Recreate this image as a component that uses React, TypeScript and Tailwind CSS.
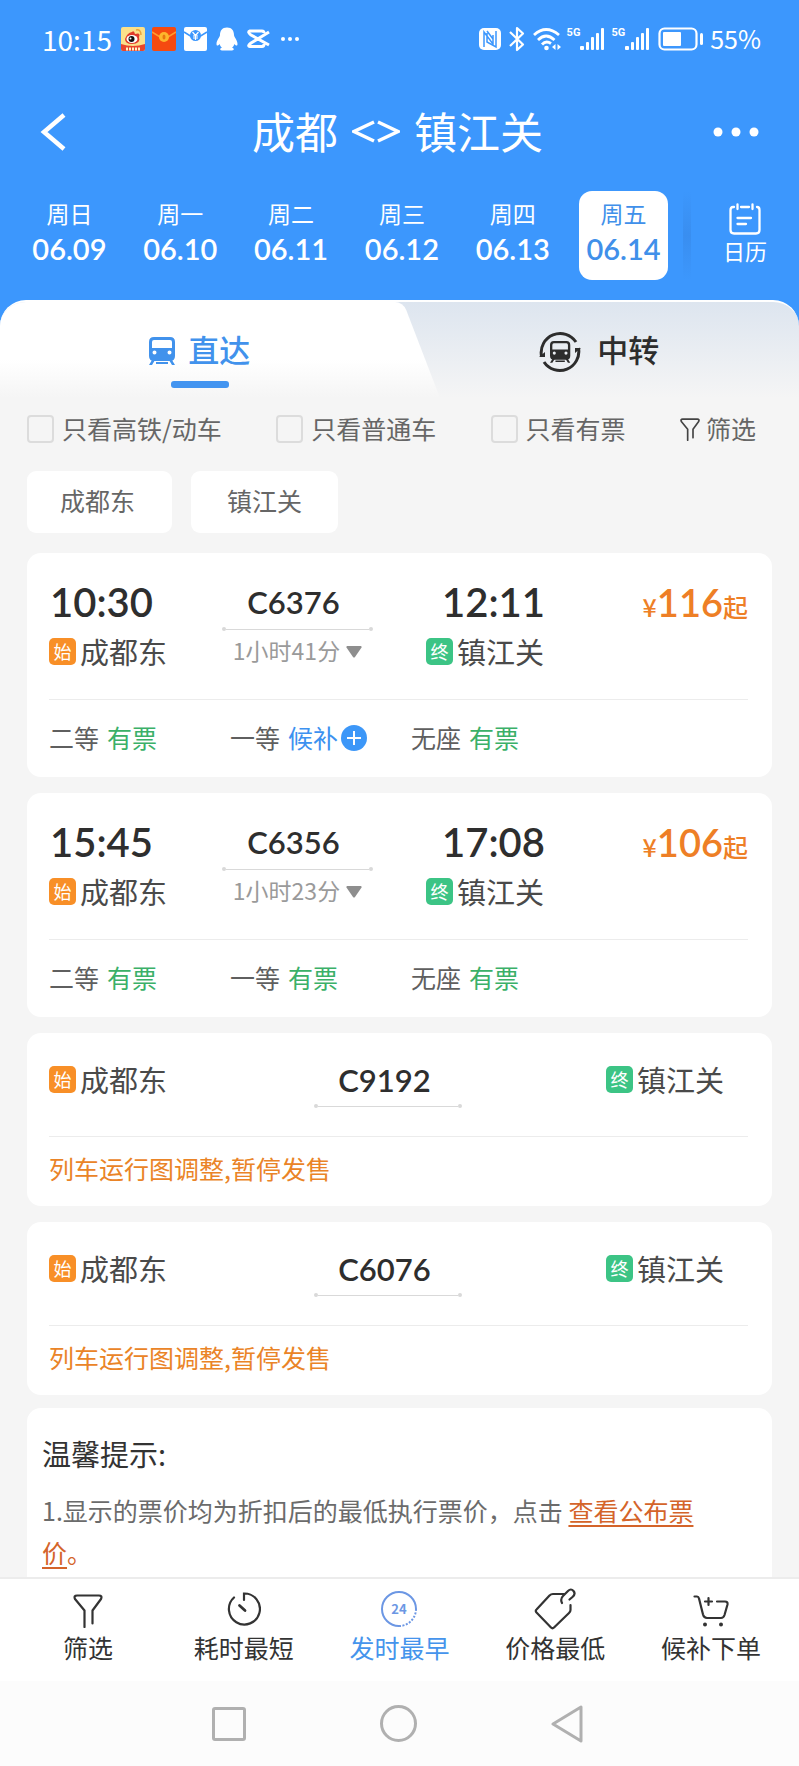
import type { ReactNode } from "react";

const dates = [
  { week: "周日", day: "06.09" },
  { week: "周一", day: "06.10" },
  { week: "周二", day: "06.11" },
  { week: "周三", day: "06.12" },
  { week: "周四", day: "06.13" },
  { week: "周五", day: "06.14", active: true },
];

const filters = ["只看高铁/动车", "只看普通车", "只看有票"];

type Seat = { name: string; status: string; waitlist?: boolean };

type Train = {
  no: string;
  depart: string;
  arrive: string;
  duration: string;
  price: string;
  seats: Seat[];
};

const trains: Train[] = [
  {
    no: "C6376",
    depart: "10:30",
    arrive: "12:11",
    duration: "1小时41分",
    price: "116",
    seats: [
      { name: "二等", status: "有票" },
      { name: "一等", status: "候补", waitlist: true },
      { name: "无座", status: "有票" },
    ],
  },
  {
    no: "C6356",
    depart: "15:45",
    arrive: "17:08",
    duration: "1小时23分",
    price: "106",
    seats: [
      { name: "二等", status: "有票" },
      { name: "一等", status: "有票" },
      { name: "无座", status: "有票" },
    ],
  },
];

const suspended = ["C9192", "C6076"];

function FunnelIcon({ className }: { className: string }) {
  return (
    <svg viewBox="0 0 30 34" className={className} fill="none" stroke="currentColor" strokeLinecap="round" strokeLinejoin="round">
      <path d="M11.500 33V16.500L2 5Q.5 1.500 4 1.500H26Q29.500 1.500 28 5L19.500 16.500V29.500" />
    </svg>
  );
}

function SignalIcon() {
  return (
    <div className="flex">
      <span className="font-[Roboto] text-[11px] leading-[12px] font-bold">5G</span>
      <svg viewBox="0 0 25 24" className="h-6 w-[25px]" fill="currentColor">
        <rect x="0" y="19" width="4" height="4" rx="1" />
        <rect x="6" y="15" width="3" height="8" rx="1" />
        <rect x="11" y="10" width="3" height="13" rx="1" />
        <rect x="16" y="6" width="3" height="17" rx="1" />
        <rect x="21" y="1" width="3" height="22" rx="1" />
      </svg>
    </div>
  );
}

function StatusBar() {
  return (
    <div className="flex h-[78px] items-center justify-between pr-[38px] pl-[42px]">
      <div className="flex items-center">
        <span className="w-[79px] text-[28px] whitespace-nowrap">10:15</span>
        <svg viewBox="0 0 24 24" className="h-6 w-6">
          <rect width="24" height="24" rx="2" fill="#fbe08a" />
          <path d="M0 17Q12 21 24 17V22Q24 24 22 24H2Q0 24 0 22Z" fill="#e8452c" />
          <path d="M5 20.500h2v3H5zM8 20.500h2v3H8zM11 20.500h2v3h-2zM14 20.500h2v3h-2zM17 20.500h2v3h-2z" fill="#fff3c4" />
          <path d="M4 12Q6 6 11 5Q13 3 14 7Q20 5 18 10Q20 17 11 17Q4 17 4 12Z" fill="#e03a2a" />
          <ellipse cx="11" cy="12" rx="5.500" ry="4" fill="#fff" />
          <circle cx="10.500" cy="12" r="3" fill="#111" />
          <circle cx="9.500" cy="11.500" r="1" fill="#fff" />
          <path d="M15 3Q20 2 20 8" fill="none" stroke="#e9a23a" strokeWidth="1.500" />
        </svg>
        <svg viewBox="0 0 24 24" className="ml-[7px] h-6 w-6">
          <rect width="24" height="24" rx="2" fill="#f54a10" />
          <path d="M0 5L8 10H16L24 5" fill="none" stroke="#ff9a2e" strokeWidth="1.500" />
          <circle cx="12" cy="10" r="5" fill="#fdb62c" />
          <ellipse cx="12" cy="10" rx="1.500" ry="2.500" fill="#e8760e" />
        </svg>
        <svg viewBox="0 0 24 24" className="ml-2 h-6 w-6">
          <rect width="23" height="24" rx="2" fill="#fff" />
          <path d="M0 5L8 10H15L23 5" fill="none" stroke="#3c97fd" strokeWidth="1.500" />
          <circle cx="11.500" cy="8.500" r="5.500" fill="#3c97fd" />
          <path d="M8.500 5L11.500 8.500L14.500 5M11.500 8.500V13M9 9H14M9 11H14" fill="none" stroke="#fff" strokeWidth="1.200" />
        </svg>
        <svg viewBox="0 0 22 24" className="ml-2 h-6 w-[22px]" fill="#fff">
          <path d="M11 0.500C6 .5 4 4 4 8C4 10 .5 13 .5 17C.5 19 2 19 3.500 17C4 18.500 5 20 6 20.500C3 22 4 23.500 7 23.500H15C18 23.500 19 22 16 20.500C17 20 18 18.500 18.500 17C20 19 21.500 19 21.500 17C21.500 13 18 10 18 8C18 4 16 .5 11 .5Z" />
        </svg>
        <svg viewBox="0 0 24 20" className="ml-2 h-5 w-6" fill="none" stroke="#fff" strokeWidth="3" strokeLinejoin="round">
          <path d="M23 3L5 14Q1 17 4 17.500H16Q18 17.500 18 15M23 16L5 6Q1 3 4 2H16Q18 2 18 4" />
        </svg>
        <svg viewBox="0 0 20 6" className="ml-[10px] h-[6px] w-5" fill="#fff">
          <circle cx="3" cy="3" r="2" />
          <circle cx="10" cy="3" r="2" />
          <circle cx="17" cy="3" r="2" />
        </svg>
      </div>
      <div className="flex items-center">
        <svg viewBox="0 0 22 24" className="h-6 w-[22px]">
          <rect y="1" width="22" height="22" rx="5" fill="#fff" />
          <path d="M5 20V5L14 17V8M8 6V15L17 20V4M8 4L14 12" fill="none" stroke="#3c97fd" strokeWidth="1.500" />
        </svg>
        <svg viewBox="0 0 16 26" className="ml-2 h-[26px] w-4" fill="none" stroke="#fff" strokeWidth="2.200" strokeLinejoin="round">
          <path d="M1 6L14 18.500L8 24V2L14 7.500L1 20" />
        </svg>
        <svg viewBox="0 0 28 24" className="ml-2 h-6 w-7" fill="none" stroke="#fff" strokeWidth="2.800">
          <path d="M1 8Q13 -3 26 8M5 13Q13 5 21.500 13M9 17.500Q13 13 18 16.500" />
          <circle cx="13.500" cy="21" r="2.300" fill="#fff" stroke="none" />
          <path d="M22.500 17V23L19 20ZM24.500 17V23L28 20Z" fill="#fff" stroke="none" />
        </svg>
        <div className="ml-[6px] flex gap-[6px]">
          <SignalIcon />
          <SignalIcon />
        </div>
        <svg viewBox="0 0 46 26" className="ml-2 h-[26px] w-[46px]">
          <rect x="1.500" y="2.500" width="37" height="21" rx="5" fill="none" stroke="#fff" strokeWidth="2.200" />
          <rect x="5" y="6" width="18" height="14" rx="1" fill="#fff" />
          <rect x="42" y="7" width="3" height="12" rx="1.500" fill="#fff" />
        </svg>
        <span className="ml-[6px] text-[25px]">55%</span>
      </div>
    </div>
  );
}

function Badge({ type }: { type: "始" | "终" }) {
  return (
    <span
      className={`flex h-[27px] w-[27px] items-center justify-center rounded-[5px] text-[18px] leading-none text-white ${
        type === "始" ? "bg-[#f88f27]" : "bg-[#3cc485]"
      }`}
    >
      {type}
    </span>
  );
}

function Station({ type, name }: { type: "始" | "终"; name: string }) {
  return (
    <div className="flex items-center gap-1 text-[29px] leading-[36px] whitespace-nowrap text-[#4a4a4a]">
      <Badge type={type} />
      {name}
    </div>
  );
}

function RouteLine() {
  return (
    <div className="flex w-full items-center">
      <i className="h-1 w-1 rounded-full bg-[#d9d9d9]" />
      <i className="h-px flex-1 bg-[#d9d9d9]" />
      <i className="h-1 w-1 rounded-full bg-[#d9d9d9]" />
    </div>
  );
}

function TrainCard({ train }: { train: Train }) {
  return (
    <article className="rounded-[14px] bg-white pr-6 pl-[22px]">
      <div className="grid h-[146px] grid-cols-[173fr_204fr_180fr_142fr] pt-[25px]">
        <div>
          <p className="pl-px font-[Lato] text-[40px] leading-[48px] font-semibold text-[#2e2e2e]">{train.depart}</p>
          <div className="mt-[7px]">
            <Station type="始" name="成都东" />
          </div>
        </div>
        <div className="flex w-[151px] flex-col items-center">
          <p className="pr-2 font-[Lato] text-[31px] leading-[49px] font-semibold text-[#2e2e2e]">{train.no}</p>
          <RouteLine />
          <button className="mt-px flex items-center gap-[6px] text-[23px] leading-[36px] whitespace-nowrap text-[#9a9a9a]">
            {train.duration}
            <svg viewBox="0 0 16 12" className="mt-1 h-3 w-4" fill="#8e8e8e">
              <path d="M1 0H15Q16 .5 15.500 1.500L9 11Q8 12 7 11L.5 1.500Q0 .5 1 0Z" />
            </svg>
          </button>
        </div>
        <div>
          <p className="pl-4 font-[Lato] text-[40px] leading-[48px] font-semibold text-[#2e2e2e]">{train.arrive}</p>
          <div className="mt-[7px]">
            <Station type="终" name="镇江关" />
          </div>
        </div>
        <p className="text-right leading-[48px] font-medium whitespace-nowrap text-[#ee7f26]">
          <span className="text-[25px]">¥</span>
          <span className="font-[Lato] text-[38px] font-semibold">{train.price}</span>
          <span className="text-[25px]">起</span>
        </p>
      </div>
      <ul className="flex h-[78px] items-center border-t border-[#ececec] pb-px text-[25px] text-[#5f5f5f]">
        {train.seats.map((seat) => (
          <li key={seat.name} className="flex w-[181px] items-center gap-2 whitespace-nowrap">
            {seat.name}
            {seat.waitlist ? (
              <button className="flex items-center gap-[3px] text-[#3c91f0]">
                {seat.status}
                <svg viewBox="0 0 26 26" className="h-[26px] w-[26px]">
                  <circle cx="13" cy="13" r="13" fill="#3c97f8" />
                  <path d="M13 6V20M6 13H20" stroke="#fff" strokeWidth="2" />
                </svg>
              </button>
            ) : (
              <span className="text-[#3bb068]">{seat.status}</span>
            )}
          </li>
        ))}
      </ul>
    </article>
  );
}

function SuspendedCard({ no }: { no: string }) {
  return (
    <article className="rounded-[14px] bg-white pr-6 pl-[22px]">
      <div className="flex h-[103px] items-start justify-between pt-[23px] pr-6">
        <div className="mt-[5px] w-[122px]">
          <Station type="始" name="成都东" />
        </div>
        <div className="w-[148px] text-center">
          <p className="pr-2 font-[Lato] text-[31px] leading-[48px] font-semibold text-[#2e2e2e]">{no}</p>
          <RouteLine />
        </div>
        <div className="mt-[5px]">
          <Station type="终" name="镇江关" />
        </div>
      </div>
      <p className="flex h-[70px] items-center border-t border-[#ececec] pb-[5px] text-[25px] text-[#ea8427]">
        列车运行图调整,暂停发售
      </p>
    </article>
  );
}

function TrainGlyph() {
  return (
    <>
      <path fillRule="evenodd" d="M5 0H21Q26 0 26 5V19Q26 24 21 24H5Q0 24 0 19V5Q0 0 5 0ZM5 3Q3 3 3 5V11H23V5Q23 3 21 3ZM5.500 13.500A2 2 0 1 0 5.500 17.500A2 2 0 1 0 5.500 13.500ZM20.500 13.500A2 2 0 1 0 20.500 17.500A2 2 0 1 0 20.500 13.500Z" />
      <path d="M3 23L0 28H3L6 23ZM23 23L26 28H23L20 23ZM7 25H19V27H7Z" />
    </>
  );
}

function BottomItem({ label, active, children }: { label: string; active?: boolean; children: ReactNode }) {
  return (
    <button
      className={`flex flex-1 flex-col items-center text-[25px] leading-[34px] whitespace-nowrap ${
        active ? "text-[#4594ec]" : "text-[#333]"
      }`}
    >
      <span className="flex h-[42px] items-center">{children}</span>
      {label}
    </button>
  );
}

export default function App() {
  return (
    <div className="flex h-screen flex-col overflow-hidden bg-[#f5f5f5] font-['Noto_Sans_CJK_SC',sans-serif]">
      <header className="bg-[#3c97fd] text-white">
        <StatusBar />
        <div className="flex h-[108px] items-center justify-between pr-10 pl-10">
          <button aria-label="返回" className="w-[42px]">
            <svg viewBox="0 0 26 38" className="h-[38px] w-[26px]" fill="none" stroke="currentColor" strokeWidth="4.500">
              <path d="M24 2L4 19L24 36" />
            </svg>
          </button>
          <h1 className="flex items-center gap-[14px] pb-1 text-[43px]">
            成都
            <svg viewBox="0 0 48 24" className="mt-1 h-6 w-12" fill="none" stroke="currentColor" strokeWidth="3.500">
              <path d="M22 2L2 11.500L22 21M26 2L46 11.500L26 21" />
            </svg>
            镇江关
          </h1>
          <button aria-label="更多">
            <svg viewBox="0 0 46 10" className="h-[10px] w-[46px]" fill="currentColor">
              <circle cx="5" cy="5" r="4.500" />
              <circle cx="23" cy="5" r="4.500" />
              <circle cx="41" cy="5" r="4.500" />
            </svg>
          </button>
        </div>
        <nav className="flex pt-[5px] pb-5 pl-[14px]">
          {dates.map((d) => (
            <div key={d.day} className="flex flex-1 justify-center">
              <button
                className={`flex h-[89px] w-[89px] flex-col items-center rounded-[13px] pt-1 ${
                  d.active ? "bg-white text-[#4090ea]" : ""
                }`}
              >
                <span className="text-[23px] leading-[36px]">{d.week}</span>
                <span className="font-[Lato] text-[29px] leading-[36px] font-semibold">{d.day}</span>
              </button>
            </div>
          ))}
          <div className="ml-1 w-2 bg-linear-to-b from-transparent via-[#398ef0] to-transparent" />
          <button className="flex w-[108px] flex-col items-center pt-3 text-[22px] leading-[30px]">
            <svg viewBox="0 0 32 32" className="h-8 w-8" fill="none" stroke="currentColor" strokeWidth="2.300" strokeLinecap="round">
              <path d="M5 4H4Q1.500 4 1.500 7V27Q1.500 30.500 5 30.500H27Q30.500 30.500 30.500 27V7Q30.500 4 28 4M12 4H20M8.500 1.500V6M23.500 1.500V6M8.500 15H22M8.500 21H17" />
            </svg>
            <span>日历</span>
          </button>
        </nav>
      </header>

      <div className="bg-linear-to-b from-[#3c97fd] from-50% to-[#f5f5f5] to-50%">
        <div className="relative isolate flex h-[98px] overflow-hidden rounded-t-[26px] border-t-2 border-white bg-linear-to-b from-[#dde5ef] to-[#f5f5f5]">
          <div className="absolute inset-y-0 left-0 -z-10 w-[48%] bg-linear-to-b from-white from-60% to-[#f5f5f5]" />
          <div className="absolute inset-y-0 left-[41%] -z-10 w-[14%] origin-bottom skew-x-[21deg] rounded-tr-[8px] bg-linear-to-b from-white from-60% to-[#f5f5f5]" />
          <button className="flex w-1/2 flex-col items-center text-[31px] leading-[44px] font-medium text-[#4192ec]">
            <span className="mt-[25px] flex items-center gap-[13px]">
              <svg viewBox="0 0 26 28" className="mt-1 h-7 w-[26px]" fill="currentColor">
                <TrainGlyph />
              </svg>
              直达
            </span>
            <span className="mt-[10px] h-[7px] w-[58px] rounded-[3px] bg-[#4294f0]" />
          </button>
          <button className="flex w-1/2 items-start justify-center gap-4 text-[31px] leading-[44px] font-medium text-[#2d2d2d]">
            <svg viewBox="0 0 42 42" className="mt-[29px] h-[42px] w-[42px]" fill="currentColor">
              <path d="M2.500 25A19 19 0 0 1 37 11M39.500 17A19 19 0 0 1 5 31" fill="none" stroke="currentColor" strokeWidth="3" />
              <path d="M0 26L6 21V26ZM42 17L36 22V17Z" />
              <g transform="translate(11 10) scale(.78)">
                <TrainGlyph />
              </g>
            </svg>
            <span className="mt-[25px]">中转</span>
          </button>
        </div>
      </div>

      <main className="flex min-h-0 flex-1 flex-col overflow-hidden px-[27px]">
        <div className="flex h-[62px] items-center justify-between pr-4 text-[25px] text-[#666]">
          {filters.map((label) => (
            <label key={label} className="flex items-center gap-2 whitespace-nowrap">
              <input type="checkbox" className="h-[28px] w-[27px] appearance-none rounded-[4px] border-2 border-[#dcdcdc]" />
              {label}
            </label>
          ))}
          <button className="flex items-center gap-[6px] whitespace-nowrap">
            <FunnelIcon className="h-[23px] w-5 stroke-[2.5] text-[#444]" />
            筛选
          </button>
        </div>
        <div className="mt-[11px] flex gap-[19px] text-[25px] text-[#666]">
          <button className="h-[62px] w-[145px] rounded-[9px] bg-white pr-1 pb-[3px]">成都东</button>
          <button className="h-[62px] w-[147px] rounded-[9px] bg-white pb-[3px]">镇江关</button>
        </div>
        <div className="mt-5 flex flex-col gap-4">
          {trains.map((train) => (
            <TrainCard key={train.no} train={train} />
          ))}
          {suspended.map((no) => (
            <SuspendedCard key={no} no={no} />
          ))}
        </div>
        <section className="mt-[13px] flex-1 rounded-t-[14px] bg-white pt-[22px] pr-12 pl-[15px]">
          <h2 className="text-[29px] leading-[46px] text-[#333]">温馨提示:</h2>
          <p className="mt-[13px] text-[25px] leading-[42px] text-[#6b6b6b]">
            1.显示的票价均为折扣后的最低执行票价，点击{" "}
            <a href="#" className="text-[#d4642a] underline underline-offset-4">
              查看公布票价
            </a>
            <span className="text-[#d4642a]">。</span>
          </p>
        </section>
      </main>

      <footer>
        <div className="flex h-[104px] border-t-2 border-[#ececec] bg-white px-[10px] pt-[9px]">
          <BottomItem label="筛选">
            <FunnelIcon className="mt-1 h-[34px] w-[30px] stroke-[2.2]" />
          </BottomItem>
          <BottomItem label="耗时最短">
            <svg viewBox="0 0 34 34" className="h-[34px] w-[34px]" fill="none" stroke="currentColor" strokeWidth="2.200" strokeLinecap="round">
              <path d="M17 8V1.500A15.500 15.500 0 1 1 7 5.500" />
              <path d="M12.500 13.500L18 18.500" strokeWidth="2.800" />
            </svg>
          </BottomItem>
          <BottomItem label="发时最早" active>
            <svg viewBox="0 0 36 36" className="h-9 w-9" fill="none" stroke="#6c97e4" strokeWidth="2">
              <path d="M35 18A17 17 0 1 0 18 35" />
              <path d="M35 18A17 17 0 0 1 18 35" strokeDasharray="2 1.500" />
              <text x="18" y="22.500" textAnchor="middle" fontSize="13" fontWeight="700" fill="#6c97e4" stroke="none">
                24
              </text>
            </svg>
          </BottomItem>
          <BottomItem label="价格最低">
            <svg viewBox="0 0 42 42" className="h-[42px] w-[42px]" fill="none" stroke="currentColor" strokeWidth="2.200" strokeLinecap="round" strokeLinejoin="round">
              <path d="M30 6H19Q17 6 15.500 7.500L2.500 21.500Q1 23 2.500 24.500L17 39.500Q18.500 41 20 39.500L35 25Q36.500 23.500 36.500 22V17" />
              <path d="M28 15Q26 11 29 8L34 3Q37 0 39.500 3Q42 6 38.500 9L35.500 11.500" />
            </svg>
          </BottomItem>
          <BottomItem label="候补下单">
            <svg viewBox="0 0 36 32" className="mt-1 h-8 w-9" fill="none" stroke="currentColor" strokeWidth="2.200" strokeLinecap="round" strokeLinejoin="round">
              <path d="M1.500 1.500H4Q5.500 1.500 6 3.500L10 19.500Q11 23 14 23H28Q30.500 23 31.500 20L34.500 9.500Q35 6.500 32 6.500H24M12 6.500H19M15.500 3V10" />
              <circle cx="12" cy="29.500" r="2" fill="currentColor" stroke="none" />
              <circle cx="28" cy="29.500" r="2" fill="currentColor" stroke="none" />
            </svg>
          </BottomItem>
        </div>
        <div className="flex h-[85px] items-center justify-center gap-[134px] bg-[#fcfcfc] pr-1">
          <button aria-label="最近任务" className="h-[34px] w-[34px] rounded-[3px] border-[3px] border-[#b0b0b0]" />
          <button aria-label="主屏幕" className="h-[37px] w-[37px] rounded-full border-[3px] border-[#b0b0b0]" />
          <button aria-label="后退">
            <svg viewBox="0 0 32 38" className="h-[38px] w-8" fill="none" stroke="#b0b0b0" strokeWidth="3" strokeLinejoin="round">
              <path d="M30 2V36L2 19Z" />
            </svg>
          </button>
        </div>
      </footer>
    </div>
  );
}
